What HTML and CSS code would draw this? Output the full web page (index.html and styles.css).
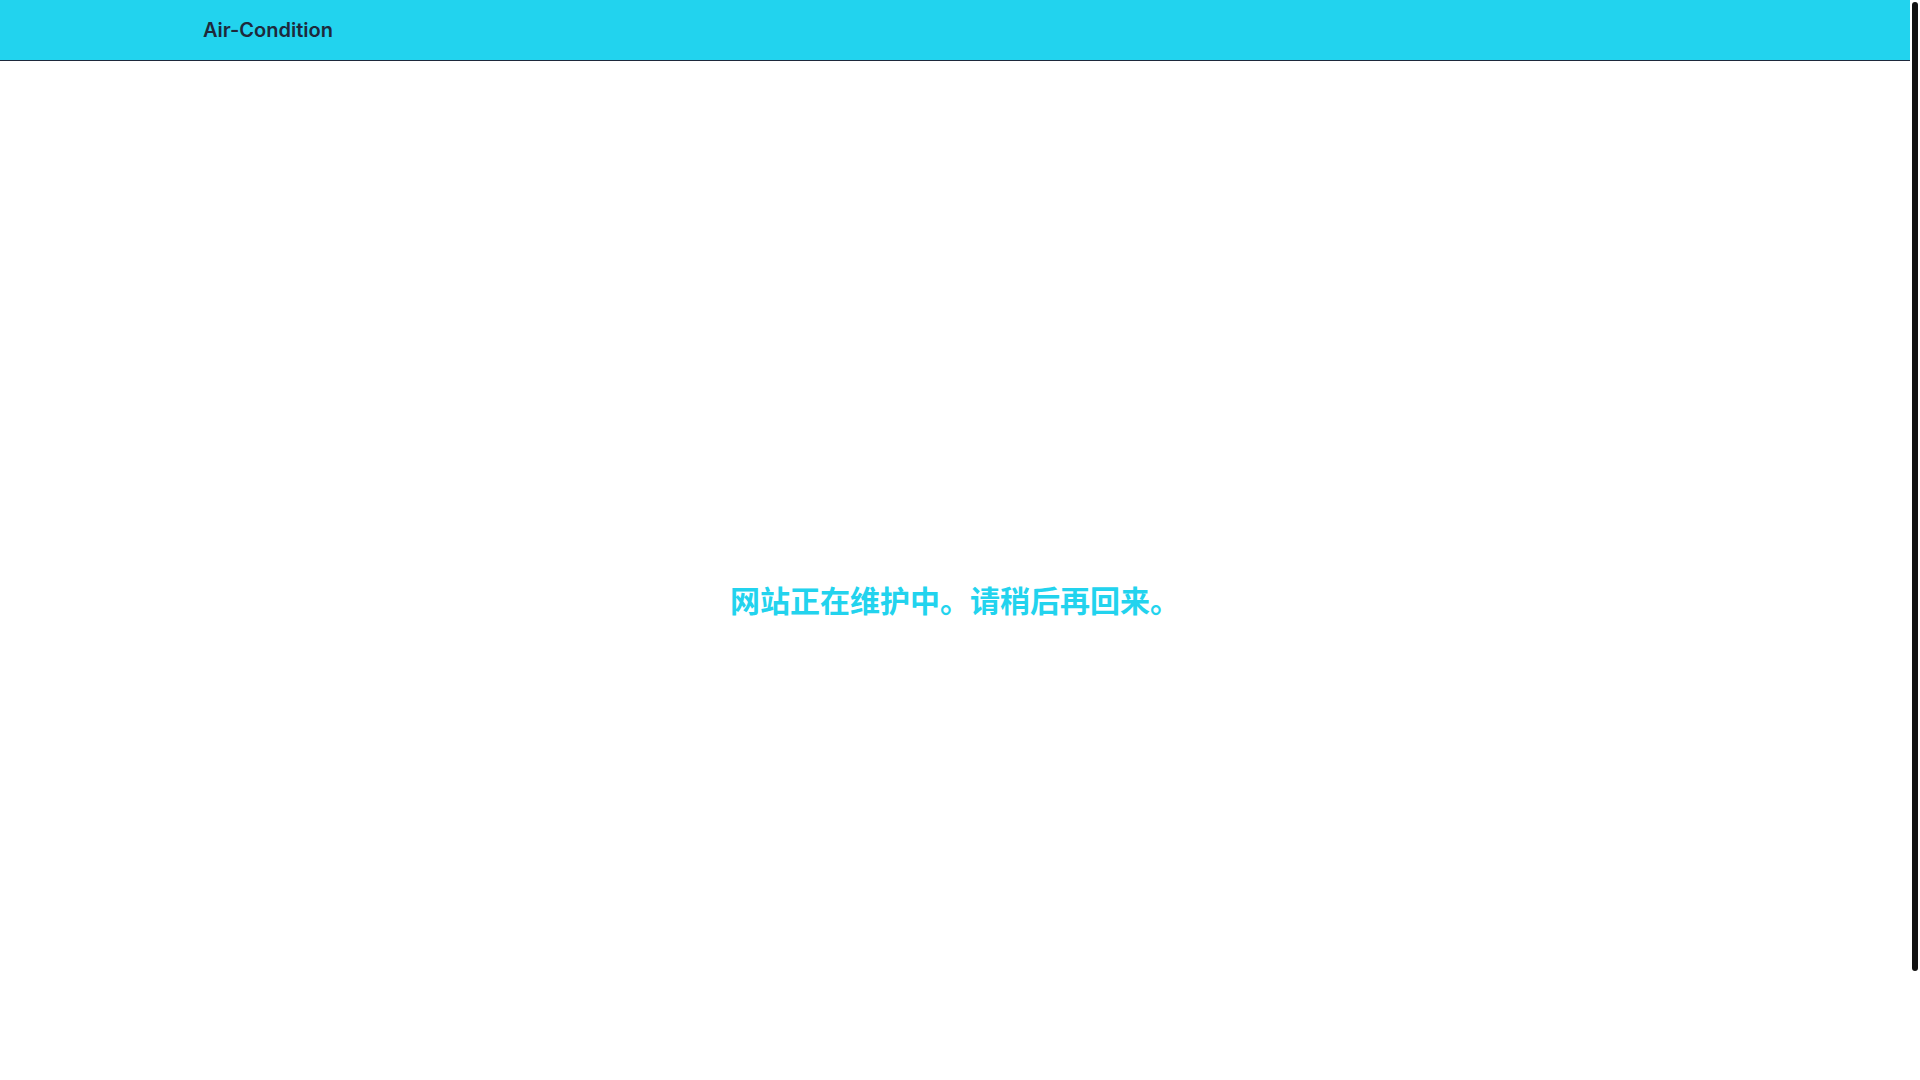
FILE: index.html
```html
<!DOCTYPE html>
<html lang="zh-CN">
<head>
<meta charset="utf-8">
<title>Air-Condition</title>
<link rel="stylesheet" href="styles.css">
</head>
<body>
<div class="viewport">
  <div class="page">
    <header class="site-header">
      <div class="container">
        <span class="brand">Air-Condition</span>
      </div>
    </header>
    <main class="main">
      <h1 class="notice">网站正在维护中。请稍后再回来。</h1>
    </main>
    <footer class="site-footer"></footer>
  </div>
  <div class="scrollbar" aria-hidden="true">
    <div class="scroll-thumb"></div>
  </div>
</div>
</body>
</html>
```

FILE: styles.css
```css
html, body {
  margin: 0;
  padding: 0;
  overflow: hidden;
}
body {
  font-family: Inter, "Noto Sans CJK SC", sans-serif;
  background: #ffffff;
}
.viewport {
  display: flex;
  height: 100vh;
  width: 100vw;
}
.page {
  flex: 1;
  min-width: 0;
  overflow: hidden;
}
.scrollbar {
  width: 10px;
  flex: none;
  background: #ffffff;
  padding: 2px 2px 0 2px;
  box-sizing: border-box;
}
.scroll-thumb {
  height: 969px;
  background: #111111;
  border-radius: 3px;
}
.site-header {
  height: 60px;
  background: #22d3ee;
  border-bottom: 1px solid #1e293b;
  display: flex;
  align-items: center;
}
.container {
  width: 100%;
  max-width: 1536px;
  margin: 0 auto;
  padding: 0 16px;
  box-sizing: border-box;
}
.brand {
  font-family: Inter, sans-serif;
  font-size: 20px;
  font-weight: 600;
  color: #1e293b;
}
.main {
  height: 1080px;
  display: flex;
  align-items: center;
  justify-content: center;
}
.notice {
  margin: 0 0 4px 0;
  font-family: "Noto Sans CJK SC", sans-serif;
  font-size: 30px;
  font-weight: 700;
  color: #22d3ee;
  line-height: 36px;
}
.site-footer {
  height: 60px;
}
```
